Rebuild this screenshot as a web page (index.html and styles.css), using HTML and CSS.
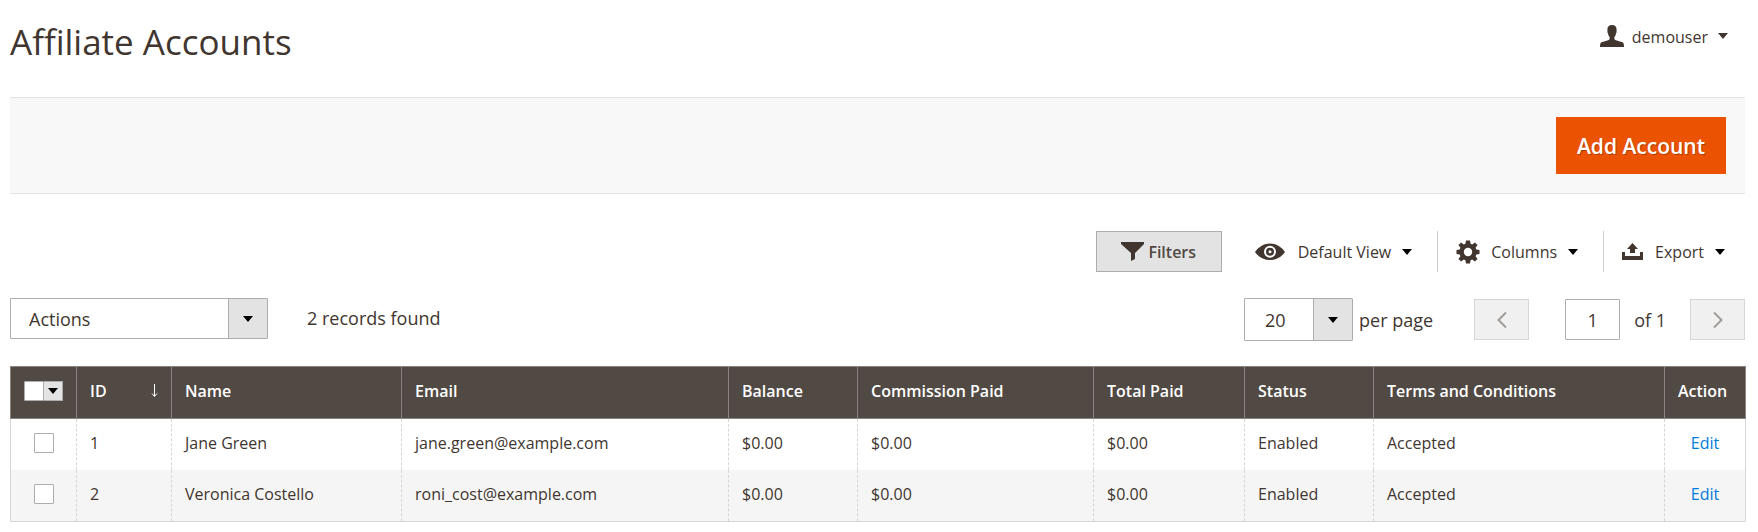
FILE: index.html
```html
<!DOCTYPE html>
<html lang="en">
<head>
    <meta charset="UTF-8">
    <meta name="viewport" content="width=device-width, initial-scale=1.0">
    <title>Affiliate Accounts</title>
    <link rel="stylesheet" href="styles.css">
</head>
<body>
    <header class="page-header">
        <h1>Affiliate Accounts</h1>
        <button type="button" class="user-menu">
            <svg class="icon-user" width="24" height="22" viewBox="0 0 24 22"><path d="M12 0c3 0 4.600 1.600 4.600 4.400 0 .7-.1 1.300-.2 1.700.5.300.3 1.800-.4 2.200-.2 1.800-.7 2.800-1.600 3.700v2.200c1.500 1.600 4.600 1.700 7.600 2.900 1.500.6 2 1.500 2 4.900H0c0-3.400.5-4.300 2-4.900 3-1.200 6.100-1.300 7.600-2.900V12C8.700 11.100 8.200 10.100 8 8.300c-.7-.4-.9-1.900-.4-2.200-.1-.4-.2-1-.2-1.700C7.400 1.600 9 0 12 0z"/></svg>
            <span>demouser</span>
            <i class="caret"></i>
        </button>
    </header>

    <div class="page-actions">
        <button type="button" class="primary">Add Account</button>
    </div>

    <!-- Grid controls -->
    <div class="grid-controls">
        <button type="button" class="filters">
            <svg width="24" height="19" viewBox="0 0 24 19"><path d="M0 0h23v2L14 11v6l-4 2v-8L0 2z"/></svg>
            <span>Filters</span>
        </button>
        <button type="button" class="control view">
            <svg width="30" height="18" viewBox="0 0 30 18"><path fill-rule="evenodd" d="M0 9C4 3.500 9 .5 15 .5S26 3.500 30 9c-4 5.500-9 8-15 8S4 14.500 0 9zM15 2.800a6 6 0 1 0 0 12 6 6 0 1 0 0-12z"/><circle cx="15" cy="8.800" r="4"/><circle cx="15" cy="8.800" r="1.500" fill="#fff"/></svg>
            <span>Default View</span>
            <i class="caret"></i>
        </button>
        <button type="button" class="control">
            <svg width="24" height="24" viewBox="0 0 24 24"><path fill-rule="evenodd" d="M10 .5h4l.6 3.200 1.600.7 2.700-1.900 2.600 2.600-1.900 2.700.7 1.600 3.200.6v4l-3.200.6-.7 1.600 1.900 2.700-2.600 2.600-2.700-1.900-1.600.7-.6 3.200h-4l-.6-3.200-1.600-.7-2.700 1.900-2.600-2.600 1.900-2.700-.7-1.600L.5 14v-4l3.200-.6.7-1.600-1.900-2.700 2.600-2.600 2.700 1.900 1.600-.7zM12 7.800a4.200 4.200 0 1 0 0 8.400 4.200 4.200 0 1 0 0-8.400z"/></svg>
            <span>Columns</span>
            <i class="caret"></i>
        </button>
        <button type="button" class="control">
            <svg width="22" height="17" viewBox="0 0 22 17"><path d="M0 9h3v4h15V9h3v8H0zM10.500 0L16 6h-3v4H8V6H5z"/></svg>
            <span>Export</span>
            <i class="caret"></i>
        </button>
    </div>

    <div class="grid-toolbar">
        <div class="select actions">
            <select aria-label="Actions">
                <option>Actions</option>
            </select>
            <i class="caret"></i>
        </div>
        <span class="records">2 records found</span>

        <div class="pager">
            <div class="select limit">
                <select id="limit">
                    <option>20</option>
                </select>
                <i class="caret"></i>
            </div>
            <label for="limit">per page</label>
            <button type="button" class="page-btn prev" aria-label="Previous page" disabled>
                <svg width="10" height="16" viewBox="0 0 10 16"><path d="M9 .5L1.500 8 9 15.500"/></svg>
            </button>
            <input type="text" id="page" class="page-input" value="1">
            <label for="page" class="page-total">of 1</label>
            <button type="button" class="page-btn" aria-label="Next page" disabled>
                <svg width="10" height="16" viewBox="0 0 10 16"><path d="M1 .5L8.500 8 1 15.500"/></svg>
            </button>
        </div>
    </div>

    <table class="data-grid">
        <colgroup>
            <col class="col-check">
            <col class="col-id">
            <col class="col-name">
            <col class="col-email">
            <col class="col-balance">
            <col class="col-commission">
            <col class="col-total">
            <col class="col-status">
            <col class="col-terms">
            <col class="col-action">
        </colgroup>
        <thead>
            <tr>
                <th class="check">
                    <div class="multicheck">
                        <input type="checkbox" aria-label="Select all">
                        <button type="button" aria-label="Selection options"><i class="caret"></i></button>
                    </div>
                </th>
                <th>
                    <div class="sorted">
                        <span>ID</span>
                        <svg width="7" height="14" viewBox="0 0 7 14"><path d="M3.500 0v12M1 9.500l2.500 3 2.500-3"/></svg>
                    </div>
                </th>
                <th>Name</th>
                <th>Email</th>
                <th>Balance</th>
                <th>Commission Paid</th>
                <th>Total Paid</th>
                <th>Status</th>
                <th>Terms and Conditions</th>
                <th>Action</th>
            </tr>
        </thead>
        <tbody>
            <tr>
                <td class="check"><input type="checkbox" aria-label="Select Jane Green"></td>
                <td>1</td>
                <td>Jane Green</td>
                <td>jane.green@example.com</td>
                <td>$0.00</td>
                <td>$0.00</td>
                <td>$0.00</td>
                <td>Enabled</td>
                <td>Accepted</td>
                <td class="action"><a href="#">Edit</a></td>
            </tr>
            <tr>
                <td class="check"><input type="checkbox" aria-label="Select Veronica Costello"></td>
                <td>2</td>
                <td>Veronica Costello</td>
                <td>roni_cost@example.com</td>
                <td>$0.00</td>
                <td>$0.00</td>
                <td>$0.00</td>
                <td>Enabled</td>
                <td>Accepted</td>
                <td class="action"><a href="#">Edit</a></td>
            </tr>
        </tbody>
    </table>
</body>
</html>
```

FILE: styles.css
```css
* {
    box-sizing: border-box;
}

body {
    font-family: "Open Sans", "Noto Sans", sans-serif;
    font-size: 16px;
    line-height: 22px;
    color: #41362f;
    background: #fff;
    margin: 0;
    padding: 0 13px 0 10px;
}

button,
input,
select {
    font: inherit;
    color: inherit;
    margin: 0;
}

button {
    display: flex;
    align-items: center;
    background: none;
    border: none;
    padding: 0;
    cursor: pointer;
}

svg {
    display: block;
    flex: none;
    fill: #41362f;
}

.caret {
    flex: none;
    border: 5px solid transparent;
    border-top: 6px solid #000;
    border-bottom: 0;
}

/* Header */
.page-header {
    display: flex;
    justify-content: space-between;
    align-items: flex-start;
    height: 97px;
    padding: 18px 17px 0 0;
}

h1 {
    font-size: 35px;
    font-weight: 400;
    line-height: 48px;
    margin: 0;
}

.user-menu {
    padding-top: 5px;
}

.user-menu span {
    margin: 3px 10px 0 8px;
}

.user-menu .caret {
    border-top-color: #41362f;
}

.page-actions {
    display: flex;
    justify-content: flex-end;
    background: #f8f8f8;
    border-top: 1px solid #e3e3e3;
    border-bottom: 1px solid #e3e3e3;
    padding: 19px;
}

.primary {
    justify-content: center;
    width: 170px;
    height: 57px;
    background: #eb5202;
    color: #fff;
    font-size: 21px;
    font-weight: 600;
    text-shadow: 1px 1px 0 rgba(0, 0, 0, 0.25);
}

/* Filters, view, columns, export */
.grid-controls {
    display: flex;
    justify-content: flex-end;
    margin-top: 37px;
}

.filters {
    width: 126px;
    height: 41px;
    justify-content: center;
    gap: 3px;
    background: #e3e3e3;
    border: 1px solid #adadad;
    font-weight: 600;
    color: #514943;
    margin-right: 15px;
}

.control {
    height: 41px;
    padding: 0 25px 0 18px;
}

.control + .control {
    border-left: 1px solid #ccc;
}

.control:last-child {
    padding-right: 20px;
}

.control span {
    margin: 0 11px;
}

.view span {
    margin-left: 13px;
}

/* Mass actions and pager */
.grid-toolbar {
    display: flex;
    align-items: flex-start;
    font-size: 18px;
    line-height: 24px;
    margin: 26px 0 25px;
}

.select {
    position: relative;
}

.select select {
    appearance: none;
    display: block;
    width: 100%;
    height: 41px;
    padding: 0 18px;
    border: 1px solid #adadad;
    border-radius: 1px;
    background: linear-gradient(to left, #e3e3e3 38px, #adadad 38px, #adadad 39px, #fff 39px);
}

.select .caret {
    position: absolute;
    top: 50%;
    right: 15px;
    margin-top: -3px;
    pointer-events: none;
}

.actions {
    width: 258px;
}

.limit {
    width: 109px;
}

.limit select {
    height: 43px;
    padding-left: 20px;
}

.records {
    line-height: 41px;
    margin-left: 39px;
}

.pager {
    display: flex;
    align-items: center;
    margin-left: auto;
}

.pager label {
    margin-left: 6px;
}

.page-btn,
.page-input {
    width: 55px;
    height: 41px;
}

.page-btn {
    justify-content: center;
    background: #f0f0f0;
    border: 1px solid #d6d6d6;
}

.page-btn svg {
    fill: none;
    stroke: #a09b97;
    stroke-width: 2;
}

.prev {
    margin: 0 36px 0 41px;
}

.page-input {
    border: 1px solid #adadad;
    border-radius: 1px;
    text-align: center;
}

.pager .page-total {
    margin: 0 24px 0 14px;
}

/* Table */
.data-grid {
    width: 100%;
    table-layout: fixed;
    border-collapse: collapse;
}

.col-check { width: 66px; }
.col-id { width: 95px; }
.col-name { width: 230px; }
.col-email { width: 327px; }
.col-balance { width: 129px; }
.col-commission { width: 236px; }
.col-total { width: 151px; }
.col-status { width: 129px; }
.col-terms { width: 291px; }
.col-action { width: 81px; }

.data-grid th,
.data-grid td {
    text-align: left;
    vertical-align: top;
    padding: 13px 13px 16px;
}

.data-grid th {
    background: #514943;
    border: 1px solid #8a837f;
    color: #fff;
    font-weight: 600;
}

.data-grid td {
    border: 1px dashed #d6d6d6;
    border-top: 0;
    border-bottom: 0;
}

.data-grid td:first-child {
    border-left-style: solid;
}

.data-grid td:last-child {
    border-right-style: solid;
}

.data-grid tbody tr:last-child td {
    border-bottom: 1px solid #d6d6d6;
}

.data-grid tbody tr:nth-child(even) {
    background: #f5f5f5;
}

.data-grid .check {
    padding: 14px 13px;
}

.data-grid td.check {
    text-align: center;
}

.data-grid .action {
    text-align: center;
}

.data-grid a {
    color: #007bdb;
    text-decoration: none;
}

input[type="checkbox"] {
    appearance: none;
    display: block;
    width: 20px;
    height: 20px;
    margin: 0 auto;
    background: #fff;
    border: 1px solid #adadad;
    border-radius: 1px;
}

.multicheck {
    display: flex;
}

.multicheck input[type="checkbox"] {
    margin: 0;
}

.multicheck button {
    justify-content: center;
    width: 19px;
    height: 20px;
    background: #e3e3e3;
    border: 1px solid #adadad;
    border-left: 0;
}

.sorted {
    display: flex;
    align-items: center;
    justify-content: space-between;
}

.sorted svg {
    fill: none;
    stroke: #fff;
}
```
